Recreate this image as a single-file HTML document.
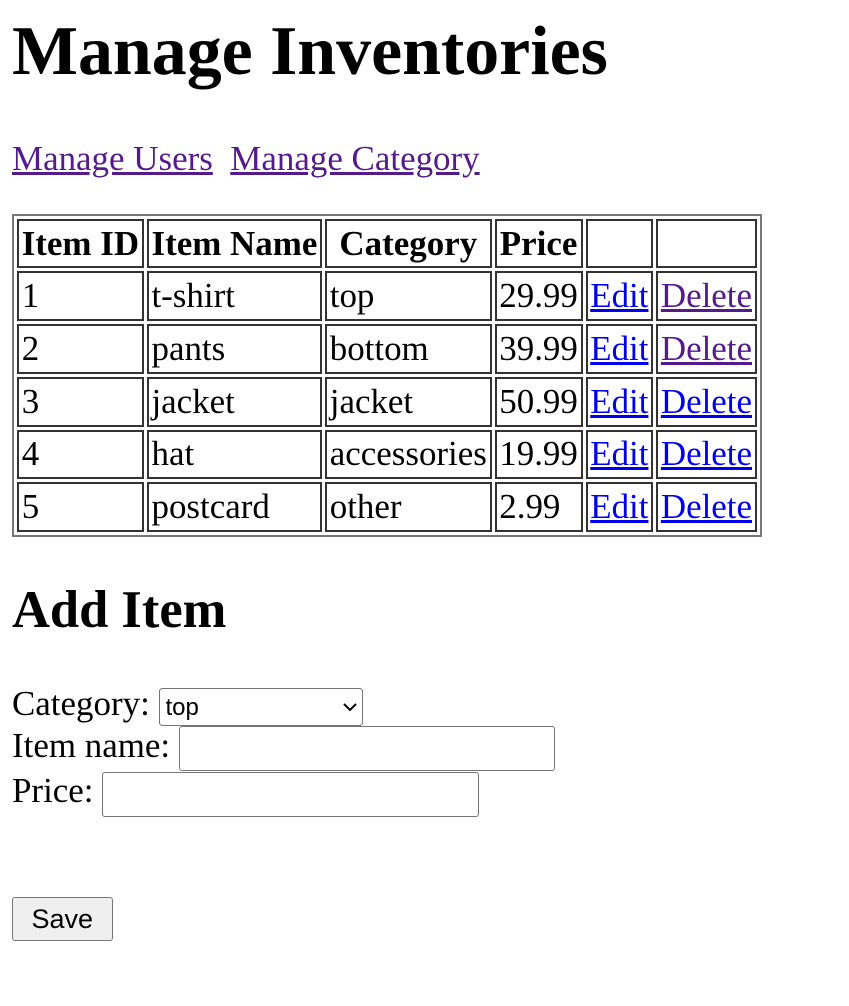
<!DOCTYPE html>
<html><head><meta charset="utf-8"><style>
html{zoom:1.5}
body{margin:8px;font-family:"Liberation Serif",serif;font-size:23.3px;color:#000;background:#fff}
a{color:#0000ee}
a.v{color:#551a8b}
table{border:1.34px solid #777;border-collapse:separate;border-spacing:2px;margin-top:2.7px}
td,th{border:1.34px solid #333;padding:1.9px 1.8px}
h1{font-size:46.6px;margin:0.1em 0 0.67em}
h2{font-size:35px;margin:0.83em 0}
select{width:136px;height:25px;font-size:16px;font-family:"Liberation Sans",sans-serif;vertical-align:middle}
input[type=text]{width:251px;height:30px;box-sizing:border-box;border:1px solid #767676;border-radius:2px;vertical-align:middle}
button{font-family:"Liberation Sans",sans-serif;font-size:18px;width:67px;height:29px;padding:0;border:1px solid #767676;border-radius:2px;background:#efefef}
</style></head><body>
<h1>Manage Inventories</h1>
<p><a class="v" href="#">Manage Users</a>&nbsp; <a class="v" href="#">Manage Category</a></p>
<table>
<tr><th>Item ID</th><th>Item Name</th><th>Category</th><th>Price</th><th></th><th></th></tr>
<tr><td>1</td><td>t-shirt</td><td>top</td><td>29.99</td><td><a href="#">Edit</a></td><td><a class="v" href="#">Delete</a></td></tr>
<tr><td>2</td><td>pants</td><td>bottom</td><td>39.99</td><td><a href="#">Edit</a></td><td><a class="v" href="#">Delete</a></td></tr>
<tr><td>3</td><td>jacket</td><td>jacket</td><td>50.99</td><td><a href="#">Edit</a></td><td><a href="#">Delete</a></td></tr>
<tr><td>4</td><td>hat</td><td>accessories</td><td>19.99</td><td><a href="#">Edit</a></td><td><a href="#">Delete</a></td></tr>
<tr><td>5</td><td>postcard</td><td>other</td><td>2.99</td><td><a href="#">Edit</a></td><td><a href="#">Delete</a></td></tr>
</table>
<h2>Add Item</h2>
<form>
Category: <select><option>top</option></select><br>
Item name: <input type="text"><br>
Price: <input type="text"><br><br><br>
<button type="button">Save</button>
</form>
</body></html>
